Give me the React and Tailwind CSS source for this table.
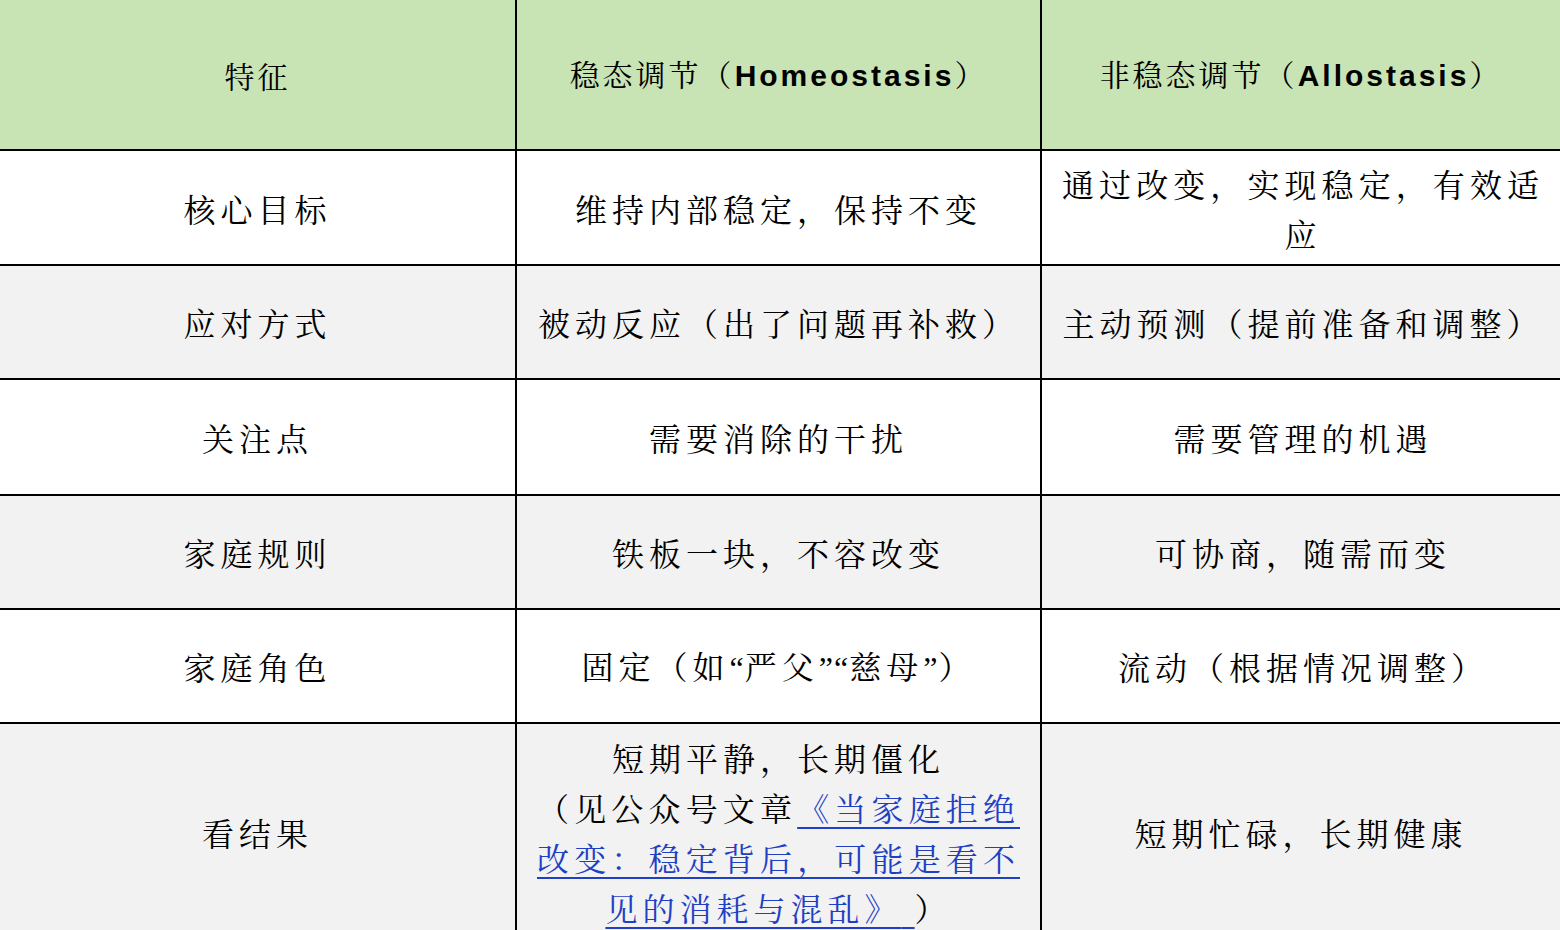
import React from "react";

const cellBase =
  "flex items-center font-['Noto_Serif_CJK_SC','Noto_Sans_CJK_SC',sans-serif] text-black";

function Cell({ bg, children, extra = "px-4" }) {
  return (
    <div className={`${cellBase} ${bg} ${extra}`}>
      <div className="w-full text-justify [text-align-last:center] text-[32px] leading-[50px] tracking-[5px]">
        {children}
      </div>
    </div>
  );
}

function Head({ children }) {
  return (
    <div className={`${cellBase} px-4 bg-[#c9e4b4]`}>
      <div className="w-full text-center text-[30px] leading-[40px] tracking-[3px]">
        {children}
      </div>
    </div>
  );
}

const Latin = ({ children }) => (
  <span className="font-['Liberation_Sans','Noto_Sans_CJK_SC',sans-serif] font-bold">
    {children}
  </span>
);

const Q = ({ children }) => (
  <span className="font-['Liberation_Serif',serif] tracking-[1px]">{children}</span>
);

const rows = [
  ["核心目标", "维持内部稳定，保持不变", "通过改变，实现稳定，有效适应"],
  ["应对方式", "被动反应（出了问题再补救）", "主动预测（提前准备和调整）"],
  ["关注点", "需要消除的干扰", "需要管理的机遇"],
  ["家庭规则", "铁板一块，不容改变", "可协商，随需而变"],
  [
    "家庭角色",
    <>
      固定（如<Q>“</Q>严父<Q>”“</Q>慈母<Q>”</Q>）
    </>,
    "流动（根据情况调整）",
  ],
];

export default function App() {
  return (
    <div className="w-[1560px] h-[930px] overflow-hidden bg-white">
      <div className="grid grid-cols-[515px_523px_1fr] grid-rows-[149px_113px_112px_114px_112px_112px_auto] gap-[2px] bg-black">
        <Head>特征</Head>
        <Head>
          稳态调节（<Latin>Homeostasis</Latin>）
        </Head>
        <Head>
          非稳态调节（<Latin>Allostasis</Latin>）
        </Head>
        {rows.map((r, i) => {
          const bg = i % 2 === 0 ? "bg-white" : "bg-[#f2f2f2]";
          return (
            <React.Fragment key={i}>
              <Cell bg={bg}>{r[0]}</Cell>
              <Cell bg={bg} extra="px-5">{r[1]}</Cell>
              <Cell bg={bg} extra="pl-5 pr-4">{r[2]}</Cell>
            </React.Fragment>
          );
        })}
        <Cell bg="bg-[#f2f2f2]" extra="px-4 py-2">看结果</Cell>
        <Cell bg="bg-[#f2f2f2]" extra="px-5 py-2">
          短期平静，长期僵化
          <br />
          （见公众号文章
          <a href="#" className="text-[#1f3fc4] underline underline-offset-[6px] decoration-[2px]">
            《当家庭拒绝改变：稳定背后，可能是看不见的消耗与混乱》{"\u00a0"}
          </a>
          ）
        </Cell>
        <Cell bg="bg-[#f2f2f2]" extra="px-4 py-2">短期忙碌，长期健康</Cell>
      </div>
    </div>
  );
}
